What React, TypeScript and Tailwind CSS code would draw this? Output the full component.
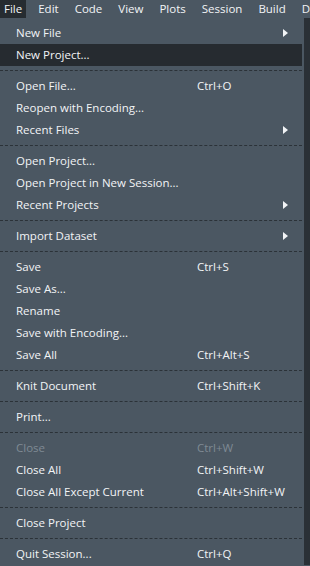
import { Fragment } from "react";

type Item = { label: string; shortcut?: string; sub?: boolean; disabled?: boolean; active?: boolean } | "sep";

const items: Item[] = [
  { label: "New File", sub: true },
  { label: "New Project...", active: true },
  "sep",
  { label: "Open File...", shortcut: "Ctrl+O" },
  { label: "Reopen with Encoding..." },
  { label: "Recent Files", sub: true },
  "sep",
  { label: "Open Project..." },
  { label: "Open Project in New Session..." },
  { label: "Recent Projects", sub: true },
  "sep",
  { label: "Import Dataset", sub: true },
  "sep",
  { label: "Save", shortcut: "Ctrl+S" },
  { label: "Save As..." },
  { label: "Rename" },
  { label: "Save with Encoding..." },
  { label: "Save All", shortcut: "Ctrl+Alt+S" },
  "sep",
  { label: "Knit Document", shortcut: "Ctrl+Shift+K" },
  "sep",
  { label: "Print..." },
  "sep",
  { label: "Close", shortcut: "Ctrl+W", disabled: true },
  { label: "Close All", shortcut: "Ctrl+Shift+W" },
  { label: "Close All Except Current", shortcut: "Ctrl+Alt+Shift+W" },
  "sep",
  { label: "Close Project" },
  "sep",
  { label: "Quit Session...", shortcut: "Ctrl+Q" },
];

const menus = ["File", "Edit", "Code", "View", "Plots", "Session", "Build", "Debug"];

export default function App() {
  return (
    <div className="w-[310px] h-[566px] overflow-hidden bg-[#4b5762] text-[11.5px] text-[#f2f4f6] font-['Segoe_UI','Open_Sans',sans-serif]">
      {/* MENU BAR */}
      <div className="flex h-[18px] items-center whitespace-nowrap overflow-hidden">
        {menus.map((m, i) => (
          <div
            key={m}
            className={`h-[18px] leading-[18px] px-[4px] mr-[8px] shrink-0 ${i === 0 ? "bg-[#262c31]" : ""}`}
          >
            {m}
          </div>
        ))}
      </div>

      <div className="flex">
        {/* DROPDOWN */}
        <div className="w-[304px] pt-[4px] bg-[#4b5762]">
          {items.map((it, idx) =>
            it === "sep" ? (
              <div key={idx} className="h-[9px] flex items-center pr-[2px]">
                <div className="w-full border-t border-dashed border-[#2b3238]" />
              </div>
            ) : (
              <Fragment key={idx}>
                <div
                  className={`h-[22px] flex items-center pl-[16px] pr-[12px] mr-[2px] ${it.active ? "bg-[#262b30]" : ""} ${it.disabled ? "text-[#7f8a94]" : ""}`}
                >
                  <span className="w-[181px] whitespace-nowrap">{it.label}</span>
                  <span className="flex-1 whitespace-nowrap">{it.shortcut}</span>
                  {it.sub && (
                    <svg width="5" height="8" viewBox="0 0 5 8" className="mr-[2px]">
                      <path d="M0 0 L5 4 L0 8 Z" fill="#f2f4f6" />
                    </svg>
                  )}
                </div>
              </Fragment>
            )
          )}
        </div>
        <div className="flex-1 bg-[#2a3036]" />
      </div>
    </div>
  );
}
